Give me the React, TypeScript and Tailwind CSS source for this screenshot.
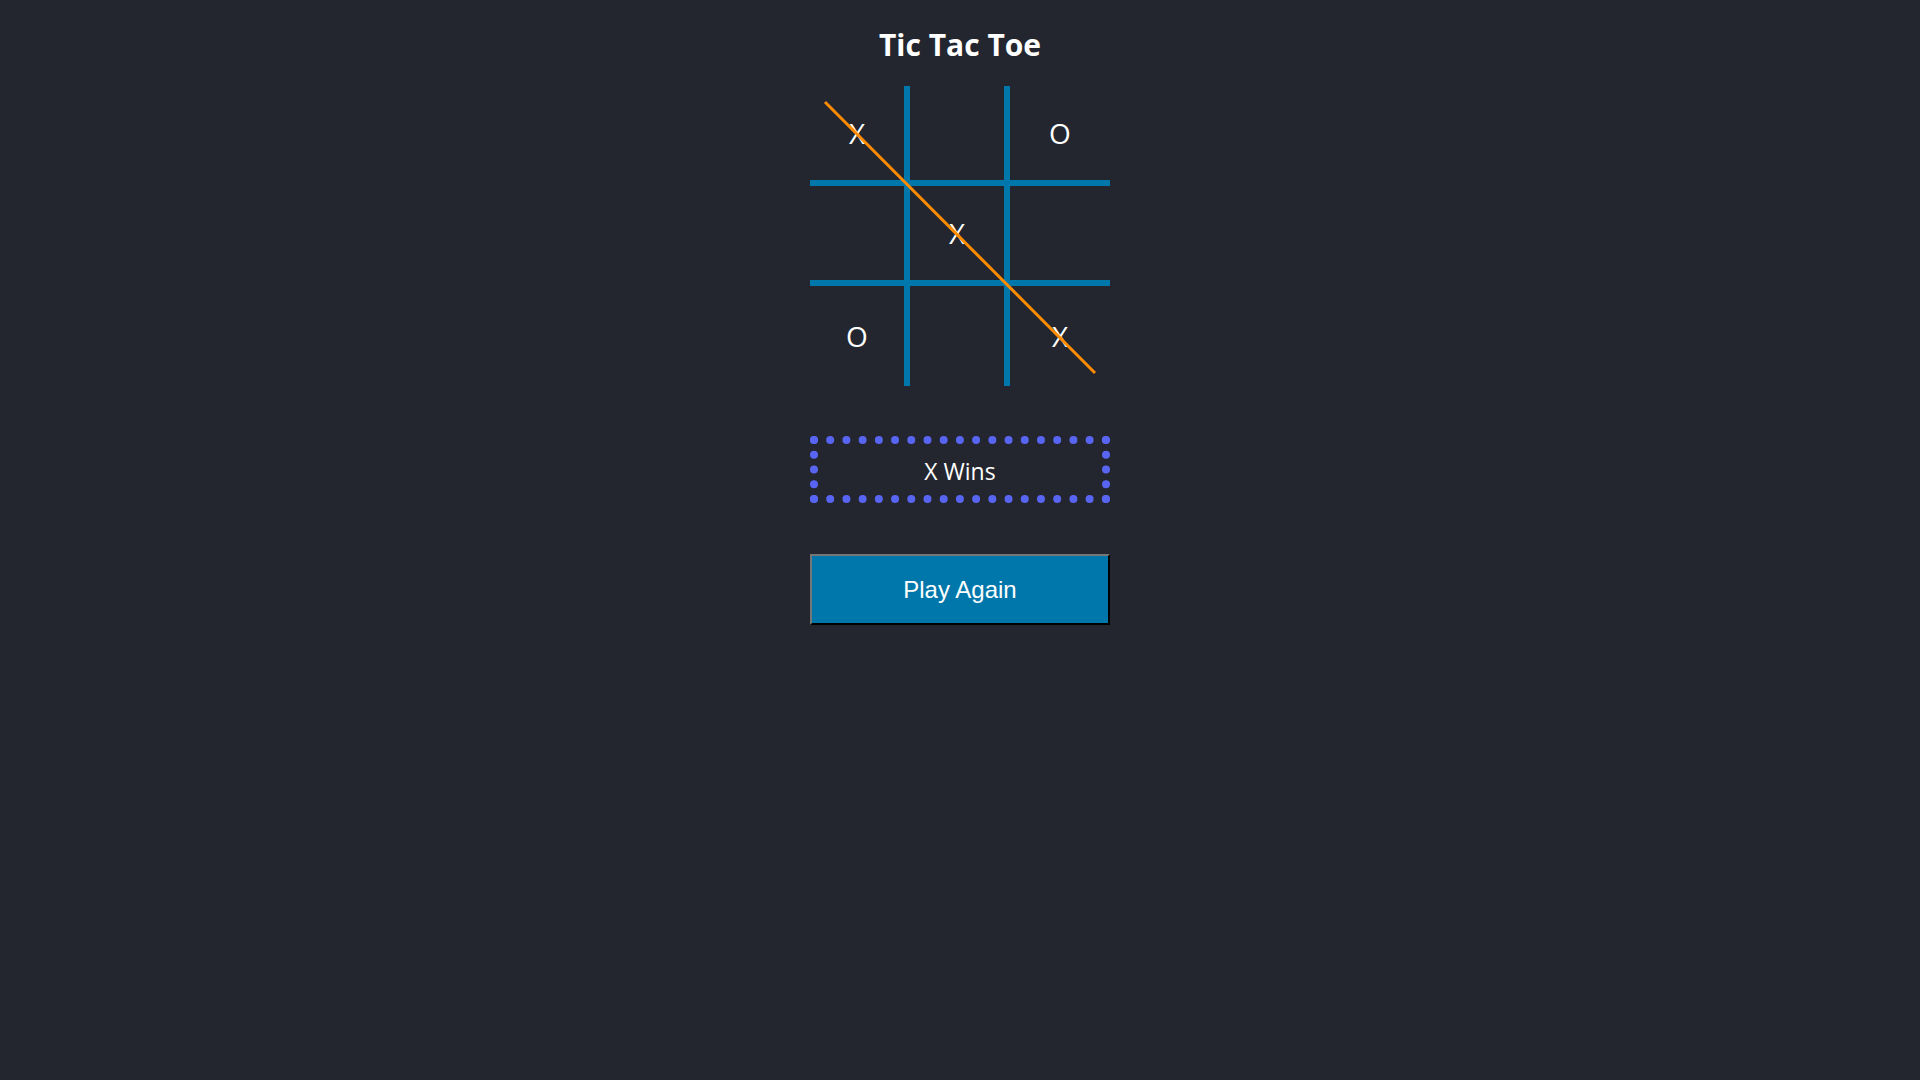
const board: Array<'X' | 'O' | ''> = ['X', '', 'O', '', 'X', '', 'O', '', 'X']

export default function App() {
  return (
    <div className="min-h-screen bg-[#23262f] flex flex-col items-center font-['Open_Sans',sans-serif] text-white">
      <h1 className="mt-[23px] h-[43px] leading-[43px] text-[30px] font-bold">Tic Tac Toe</h1>

      {/* Board */}
      <div className="relative mt-[20px] grid grid-cols-[100px_100px_100px] grid-rows-[100px_100px_100px]">
        {board.map((cell, i) => {
          const right = i % 3 !== 2
          const bottom = i < 6
          return (
            <div
              key={i}
              className={`flex items-center justify-center border-[#0077aa] text-[28px] leading-none ${
                right ? 'border-r-[6px]' : ''
              } ${bottom ? 'border-b-[6px]' : ''}`}
            >
              {cell}
            </div>
          )
        })}
        <svg className="absolute inset-0 pointer-events-none overflow-visible" width="300" height="300">
          <line x1="15" y1="16" x2="285" y2="287" stroke="#ff8c00" strokeWidth="3" />
        </svg>
      </div>

      {/* Status */}
      <div className="mt-[50px] w-[300px] h-[67px] pt-[3px] border-[8px] border-dotted border-[#5865f2] flex items-center justify-center text-[23px]">
        X Wins
      </div>

      <button className="mt-[51px] w-[300px] h-[71px] bg-[#0077aa] border-2 border-t-[#767676] border-l-[#767676] border-b-black border-r-black font-['Liberation_Sans',Arial,sans-serif] text-[24px] text-white">
        Play Again
      </button>
    </div>
  )
}
